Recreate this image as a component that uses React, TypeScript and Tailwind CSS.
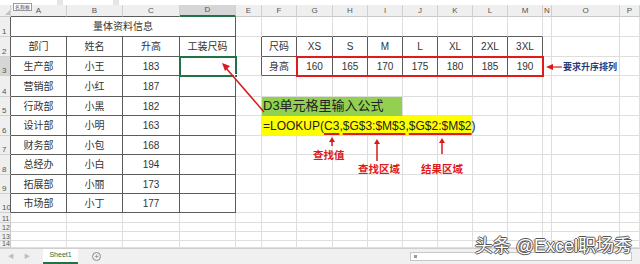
import { Fragment } from 'react';

const cols = ['', 'A', 'B', 'C', 'D', 'E', 'F', 'G', 'H', 'I', 'J', 'K', 'L', 'M', 'N', 'O', 'P'];

const data: Record<string, string> = {
  '2-1': '部门', '2-2': '姓名', '2-3': '升高', '2-4': '工装尺码',
  '3-1': '生产部', '3-2': '小王', '3-3': '183',
  '4-1': '营销部', '4-2': '小红', '4-3': '187',
  '5-1': '行政部', '5-2': '小黑', '5-3': '182',
  '6-1': '设计部', '6-2': '小明', '6-3': '163',
  '7-1': '财务部', '7-2': '小包', '7-3': '168',
  '8-1': '总经办', '8-2': '小白', '8-3': '194',
  '9-1': '拓展部', '9-2': '小丽', '9-3': '173',
  '10-1': '市场部', '10-2': '小丁', '10-3': '177',
  '2-6': '尺码', '2-7': 'XS', '2-8': 'S', '2-9': 'M', '2-10': 'L', '2-11': 'XL', '2-12': '2XL', '2-13': '3XL',
  '3-6': '身高', '3-7': '160', '3-8': '165', '3-9': '170', '3-10': '175', '3-11': '180', '3-12': '185', '3-13': '190',
};

// bordered tables: A1:D10 and F2:M3
function inTable(r: number, c: number) {
  if (r >= 1 && r <= 10 && c >= 1 && c <= 4) return true;
  if (r >= 2 && r <= 3 && c >= 6 && c <= 13) return true;
  return false;
}

function borderCls(r: number, c: number) {
  const right = inTable(r, c) || inTable(r, c + 1) ? 'border-r-[#5c5c5c]' : 'border-r-[#dedede]';
  const bottom = inTable(r, c) || inTable(r + 1, c) ? 'border-b-[#5c5c5c]' : 'border-b-[#dedede]';
  return `border-r border-b ${right} ${bottom}`;
}

function SheetRow({ r }: { r: number }) {
  const cells = [];
  for (let c = 1; c <= 16; c++) {
    if (r === 1 && c === 1) {
      cells.push(
        <div key={c} className="col-span-4 flex items-center justify-center border-r border-b border-r-[#5c5c5c] border-b-[#5c5c5c] text-[10px] text-[#333]">
          量体资料信息
        </div>
      );
      c += 3;
      continue;
    }
    if (r === 5 && c === 6) {
      cells.push(
        <div key={c} className="col-span-4 flex items-center bg-[#92d050] pl-[1px] text-[13px] text-[#222] border-r border-b border-r-[#dedede] border-b-[#92d050]">
          D3单元格里输入公式
        </div>
      );
      c += 3;
      continue;
    }
    if (r === 6 && c === 6) {
      cells.push(
        <div key={c} className="col-span-6 flex items-center whitespace-nowrap bg-[#ffff00] pl-[1px] text-[12px] text-[#222] border-r border-b border-r-[#dedede] border-b-[#dedede]">
          =LOOKUP(
          <span className="underline decoration-[#e01b1b] decoration-2 underline-offset-[3px]">C3</span>,
          <span className="underline decoration-[#e01b1b] decoration-2 underline-offset-[3px]">$G$3:$M$3</span>,
          <span className="underline decoration-[#e01b1b] decoration-2 underline-offset-[3px]">$G$2:$M$2</span>)
        </div>
      );
      c += 5;
      continue;
    }
    const txt = data[`${r}-${c}`];
    cells.push(
      <div key={c} className={`flex items-center justify-center overflow-hidden text-[10px] text-[#333] ${borderCls(r, c)}`}>
        {txt}
      </div>
    );
  }
  const selected = r === 3;
  const small = r > 10;
  return (
    <Fragment>
      <div
        className={`flex items-end overflow-hidden pl-[2px] text-[#555] border-b border-b-[#d0d0d0] border-r ${
          small ? 'text-[7px] leading-[7px]' : 'text-[8px] leading-[9px]'
        } ${inTable(r, 1) ? 'border-r-[#5c5c5c]' : 'border-r-[#c8c8c8]'} ${selected ? 'bg-[#d6d6d6]' : 'bg-[#efefef]'}`}
      >
        {r}
      </div>
      {cells}
    </Fragment>
  );
}

export default function App() {
  const rows = [1, 2, 3, 4, 5, 6, 7, 8, 9, 10, 11, 12, 13, 14];

  return (
    <div className="relative w-[640px] h-[264px] overflow-hidden bg-white font-['Liberation_Sans','Noto_Sans_CJK_SC',sans-serif]">
      {/* formula bar remnant */}
      <div className="flex h-[5px] gap-[6px] bg-[#e6e6e6]">
        <div className="w-[57px] bg-white"></div>
        <div className="w-[50px] bg-white"></div>
        <div className="flex-1 bg-white"></div>
      </div>

      <div className="grid grid-cols-[11px_56px_56px_57px_56px_26px_35px_36px_35px_35px_35px_35px_35px_35px_9px_68px_20px] grid-rows-[12px_20px_20px_19px_21px_19px_20px_19px_20px_19px_19px_10px_9px_9px_7px]">
        {cols.map((col, c) => (
          <div
            key={col + c}
            className={`flex items-center justify-center text-[8px] text-[#555] border-r border-r-[#d0d0d0] ${
              c === 4 ? 'bg-[#d6d6d6] border-b-2 border-b-[#217346]' : 'bg-[#efefef] border-b'
            } ${c >= 1 && c <= 3 ? 'border-b-[#5c5c5c]' : ''} ${c !== 4 && (c === 0 || c > 4) ? 'border-b-[#c8c8c8]' : ''}`}
          >
            {c === 0 ? (
              <span className="self-end ml-auto mb-[1px] mr-[1px] h-0 w-0 border-l-[5px] border-t-[5px] border-l-transparent border-t-transparent border-b-0 border-r-[5px] border-r-[#c0c0c0]"></span>
            ) : (
              col
            )}
          </div>
        ))}
        {rows.map((r) => (
          <SheetRow key={r} r={r} />
        ))}
      </div>

      {/* sheet tabs */}
      <div className="flex h-[16px] items-center border-t border-[#cfcfcf] bg-[#f0f0f0] text-[#bdbdbd]">
        <span className="ml-[8px] text-[6px]">◀</span>
        <span className="ml-[10px] text-[6px]">▶</span>
        <div className="ml-[13px] flex h-full w-[35px] items-center justify-center border-b-2 border-[#217346] bg-white text-[7px] text-[#217346]">
          Sheet1
        </div>
        <span className="ml-[14px] flex h-[9px] w-[9px] items-center justify-center rounded-full border border-[#8a8a8a] text-[8px] leading-none text-[#777]">
          +
        </span>
        <div className="ml-auto mr-[8px] flex h-[9px] w-[222px] items-center border border-[#c6c6c6] bg-white">
          <span className="ml-[3px] h-[3px] w-[3px] bg-[#999]"></span>
        </div>
      </div>

      {/* name box tooltip */}
      <div className="absolute left-[13px] top-[3px] border border-[#9a9a9a] bg-white px-[1px] text-[5px] leading-[6px] text-[#444]">
        名称框
      </div>

      {/* selection D3 */}
      <div className="absolute left-[179px] top-[56px] h-[21px] w-[58px] border-2 border-[#217346]">
        <span className="absolute -bottom-[3px] -right-[3px] h-[4px] w-[4px] border border-white bg-[#217346]"></span>
      </div>

      {/* red frame G3:M3 */}
      <div className="absolute left-[296px] top-[56px] h-[21px] w-[248px] border-2 border-[#e01b1b]"></div>

      {/* arrows */}
      <svg className="absolute inset-0" width="640" height="264" viewBox="0 0 640 264">
        <g stroke="#d91a1a" strokeWidth="1.5" fill="#d91a1a">
          <line x1="264" y1="112" x2="226" y2="68" />
          <polygon points="222,63 230,66 225,71" stroke="none" />
          <line x1="562" y1="67" x2="552" y2="67" strokeWidth="1.2" />
          <polygon points="546,67 553,64 553,70" stroke="none" />
          <line x1="332" y1="146" x2="332" y2="141" />
          <polygon points="332,137 329,142 335,142" stroke="none" />
          <line x1="377" y1="161" x2="377" y2="143" />
          <polygon points="377,139 374,144 380,144" stroke="none" />
          <line x1="442" y1="154" x2="442" y2="142" />
          <polygon points="442,138 439,143 445,143" stroke="none" />
        </g>
      </svg>

      <div className="absolute left-[563px] top-[61px] text-[9px] font-bold text-[#1f3a7a]">要求升序排列</div>
      <div className="absolute left-[313px] top-[148px] text-[10.5px] font-bold text-[#e01b1b]">查找值</div>
      <div className="absolute left-[358px] top-[162px] text-[10.5px] font-bold text-[#e01b1b]">查找区域</div>
      <div className="absolute left-[421px] top-[162px] text-[10.5px] font-bold text-[#e01b1b]">结果区域</div>

      {/* watermark */}
      <div className="absolute right-[8px] top-[236px] text-[18px] leading-[20px] text-white [text-shadow:1px_0_0_#555,-1px_0_0_#555,0_1px_0_#555,0_-1px_0_#555]">
        头条 @Excel职场秀
      </div>
    </div>
  );
}
